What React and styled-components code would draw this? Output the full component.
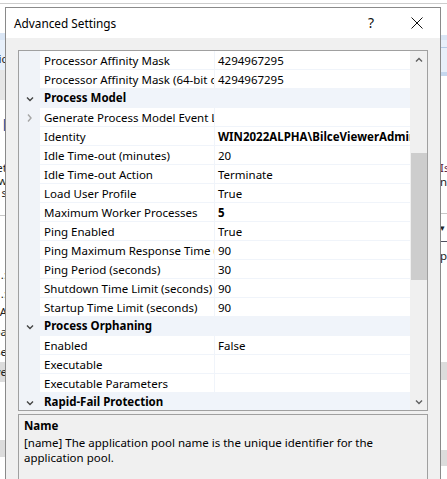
import React from 'react'
import styled, { createGlobalStyle } from 'styled-components'

const GlobalStyle = createGlobalStyle`
  body {
    margin: 0;
    font-family: "Segoe UI", "Noto Sans", sans-serif;
    background: #fff;
  }
`

const rows = [
  { name: 'Processor Affinity Mask', value: '4294967295' },
  { name: 'Processor Affinity Mask (64-bit option)', value: '4294967295' },
  { category: 'Process Model', open: true },
  { name: 'Generate Process Model Event Log Entry', value: '', expand: true },
  { name: 'Identity', value: 'WIN2022ALPHA\\BilceViewerAdmin', bold: true },
  { name: 'Idle Time-out (minutes)', value: '20' },
  { name: 'Idle Time-out Action', value: 'Terminate' },
  { name: 'Load User Profile', value: 'True' },
  { name: 'Maximum Worker Processes', value: '5', bold: true },
  { name: 'Ping Enabled', value: 'True' },
  { name: 'Ping Maximum Response Time (seconds)', value: '90' },
  { name: 'Ping Period (seconds)', value: '30' },
  { name: 'Shutdown Time Limit (seconds)', value: '90' },
  { name: 'Startup Time Limit (seconds)', value: '90' },
  { category: 'Process Orphaning', open: true },
  { name: 'Enabled', value: 'False' },
  { name: 'Executable', value: '' },
  { name: 'Executable Parameters', value: '' },
  { category: 'Rapid-Fail Protection', open: true },
]

// strips of the window behind the dialog (only its edges show)
const leftBands = [
  { h: 26, bg: '#fff' },
  { h: 7, bg: '#dae6f5' },
  { h: 12, bg: '#e8f0fa' },
  { h: 14, bg: '#e8f0fa', text: 'ic' },
  { h: 4, bg: '#e8f0fa' },
  { h: 30, bg: '#e6e6e6' },
  { h: 15, bg: '#fff' },
  { h: 20, bg: '#fff', text: 'l', color: '#1e5aa0', size: 17 },
  { h: 26, bg: '#fff' },
  { h: 14, bg: '#fff', text: 'et' },
  { h: 12, bg: '#fff', text: 'w' },
  { h: 12, bg: '#fff', text: 's' },
  { h: 16, bg: '#fff' },
  { h: 1, bg: '#c8c8c8' },
  { h: 49, bg: '#fff' },
  { h: 20, bg: '#fff', text: '.:' },
  { h: 17, bg: '#fff', text: '.:' },
  { h: 20, bg: '#fff', text: 'A' },
  { h: 20, bg: '#fff', text: 'oa' },
  { h: 20, bg: '#fff', text: 'se' },
  { h: 20, bg: '#dcdcdc', text: 've' },
  { h: 58, bg: '#fff' },
  { h: 17, bg: '#dcdcdc' },
  { h: 60, bg: '#fff' },
]

const rightBands = [
  { h: 28, bg: '#fff' },
  { h: 5, bg: '#dae6f5' },
  { h: 7, bg: '#e8f0fa' },
  { h: 1, bg: '#b5cbe6' },
  { h: 24, bg: '#e8f0fa' },
  { h: 4, bg: '#c6d8ef' },
  { h: 85, bg: '#fff' },
  { h: 14, bg: '#fff', text: 'Is', left: true, color: '#5a2040' },
  { h: 14, bg: '#fff', text: 'n', left: true },
  { h: 24, bg: '#fff' },
  { h: 1, bg: '#c8c8c8' },
  { h: 27, bg: '#fff', text: '▾', left: true, size: 9 },
  { h: 1, bg: '#505060' },
  { h: 6, bg: '#fff' },
  { h: 16, bg: '#fff', text: 'p', left: true },
  { h: 98, bg: '#fff' },
  { h: 18, bg: '#dcdcdc' },
  { h: 70, bg: '#fff' },
  { h: 16, bg: '#dcdcdc' },
  { h: 20, bg: '#fff' },
]

function Chevron({ dir, color }) {
  const d = {
    down: 'M1 1.5 L4 4.5 L7 1.5',
    up: 'M1 4.5 L4 1.5 L7 4.5',
    right: 'M2 0.5 L5 4 L2 7.5',
  }[dir]
  return (
    <svg width="8" height={dir === 'right' ? 8 : 6} viewBox={dir === 'right' ? '0 0 8 8' : '0 0 8 6'}>
      <path d={d} fill="none" stroke={color} strokeWidth="1.4" />
    </svg>
  )
}

function PropertyRow({ row }) {
  if (row.category) {
    return (
      <Row>
        <Gutter>{row.open && <Chevron dir="down" color="#444" />}</Gutter>
        <CategoryLabel>{row.category}</CategoryLabel>
      </Row>
    )
  }
  return (
    <Row>
      <Gutter>{row.expand && <Chevron dir="right" color="#a6a6a6" />}</Gutter>
      <NameCell>{row.name}</NameCell>
      <ValueCell $bold={row.bold}>{row.value}</ValueCell>
    </Row>
  )
}

export default function App() {
  return (
    <>
      <GlobalStyle />
      <Desktop>
        <BackWindow>
          <TopStrip />
          <Sides>
            <Side>
              {leftBands.map((b, i) => (
                <Band key={i} $h={b.h} $bg={b.bg} $color={b.color} $size={b.size}>{b.text}</Band>
              ))}
            </Side>
            <Side>
              {rightBands.map((b, i) => (
                <Band key={i} $h={b.h} $bg={b.bg} $left={b.left} $color={b.color} $size={b.size}>{b.text}</Band>
              ))}
            </Side>
          </Sides>
        </BackWindow>

        <Dialog>
          <TitleBar>
            <Title>Advanced Settings</Title>
            <CaptionButton>?</CaptionButton>
            <CaptionButton>
              <svg width="12" height="12" viewBox="0 0 12 12">
                <path d="M0.5 0.5 L11.5 11.5 M11.5 0.5 L0.5 11.5" stroke="#111" strokeWidth="1" />
              </svg>
            </CaptionButton>
          </TitleBar>

          <Body>
            <GridBox>
              <Rows>
                {rows.map((r, i) => (
                  <PropertyRow key={i} row={r} />
                ))}
              </Rows>
              <ScrollBar>
                <ScrollButton><Chevron dir="up" color="#606060" /></ScrollButton>
                <Track>
                  <Thumb />
                </Track>
                <ScrollButton><Chevron dir="down" color="#606060" /></ScrollButton>
              </ScrollBar>
            </GridBox>

            <DescBox>
              <DescTitle>Name</DescTitle>
              <DescText>
                [name] The application pool name is the unique identifier for the
                <br />
                application pool.
              </DescText>
            </DescBox>
          </Body>
        </Dialog>
      </Desktop>
    </>
  )
}

const Desktop = styled.div`
  position: relative;
  width: 447px;
  height: 479px;
  overflow: hidden;
  background: #fff;
`

const BackWindow = styled.div`
  display: flex;
  flex-direction: column;
  height: 100%;
`

const TopStrip = styled.div`
  height: 7px;
  flex-shrink: 0;
  background: linear-gradient(to bottom, #fff 3px, #cdcdcd 3px, #cdcdcd 4px, #fff 4px);
`

const Sides = styled.div`
  flex: 1;
  display: flex;
  justify-content: space-between;
`

const Side = styled.div`
  width: 7px;
  display: flex;
  flex-direction: column;
  overflow: hidden;
`

const Band = styled.div`
  height: ${p => p.$h}px;
  flex-shrink: 0;
  background: ${p => p.$bg};
  display: flex;
  align-items: center;
  justify-content: ${p => (p.$left ? 'flex-start' : 'flex-end')};
  white-space: nowrap;
  overflow: hidden;
  font-size: ${p => p.$size || 11.5}px;
  line-height: 14px;
  color: ${p => p.$color || '#222'};
`

const Dialog = styled.div`
  position: absolute;
  left: 5px;
  top: 7px;
  width: 436px;
  height: 490px;
  box-sizing: border-box;
  border: 1px solid #8a8a8a;
  background: #f0f0f0;
  display: flex;
  flex-direction: column;
`

const TitleBar = styled.div`
  height: 30px;
  flex-shrink: 0;
  background: #fff;
  display: flex;
  align-items: center;
  padding-left: 8px;
  padding-bottom: 1px;
  box-sizing: border-box;
`

const Title = styled.div`
  flex: 1;
  font-size: 11.8px;
  color: #000;
`

const CaptionButton = styled.div`
  width: 46px;
  height: 29px;
  display: flex;
  align-items: center;
  justify-content: center;
  font-size: 14px;
  color: #111;
`

const Body = styled.div`
  padding: 12px 12px 0 12px;
  display: flex;
  flex-direction: column;
  gap: 3px;
`

const GridBox = styled.div`
  height: 361px;
  box-sizing: border-box;
  border: 1px solid #a0a0a0;
  background: #fff;
  display: flex;
`

const Rows = styled.div`
  flex: 1;
  overflow: hidden;
  display: flex;
  flex-direction: column;
`

const Row = styled.div`
  height: 19px;
  flex-shrink: 0;
  display: flex;
  font-size: 11.5px;
  color: #000;
`

const Gutter = styled.div`
  width: 21px;
  flex-shrink: 0;
  background: #f0f3f8;
  display: flex;
  align-items: center;
  justify-content: center;
`

const CategoryLabel = styled.div`
  flex: 1;
  background: #f0f4fa;
  font-weight: bold;
  line-height: 18px;
  padding-left: 4px;
`

const NameCell = styled.div`
  width: 174px;
  flex-shrink: 0;
  box-sizing: border-box;
  padding: 1px 0 0 4px;
  line-height: 17px;
  border-bottom: 1px solid #f0f4fa;
  white-space: nowrap;
  overflow: hidden;
`

const ValueCell = styled.div`
  flex: 1;
  min-width: 0;
  padding: 1px 0 0 3px;
  line-height: 17px;
  border-left: 1px solid #f0f4fa;
  border-bottom: 1px solid #f0f4fa;
  white-space: nowrap;
  overflow: hidden;
  font-weight: ${p => (p.$bold ? 'bold' : 'normal')};
`

const ScrollBar = styled.div`
  width: 17px;
  flex-shrink: 0;
  background: #f0f0f0;
  display: flex;
  flex-direction: column;
`

const ScrollButton = styled.div`
  height: 17px;
  display: flex;
  align-items: center;
  justify-content: center;
`

const Track = styled.div`
  flex: 1;
  padding-left: 1px;
`

const Thumb = styled.div`
  margin-top: 85px;
  height: 127px;
  background: #cdcdcd;
`

const DescBox = styled.div`
  height: 80px;
  border: 1px solid #a0a0a0;
  padding: 3px 5px;
  font-size: 11.5px;
  line-height: 15px;
  color: #000;
`

const DescTitle = styled.div`
  font-weight: bold;
  margin-bottom: 2px;
`

const DescText = styled.div``
